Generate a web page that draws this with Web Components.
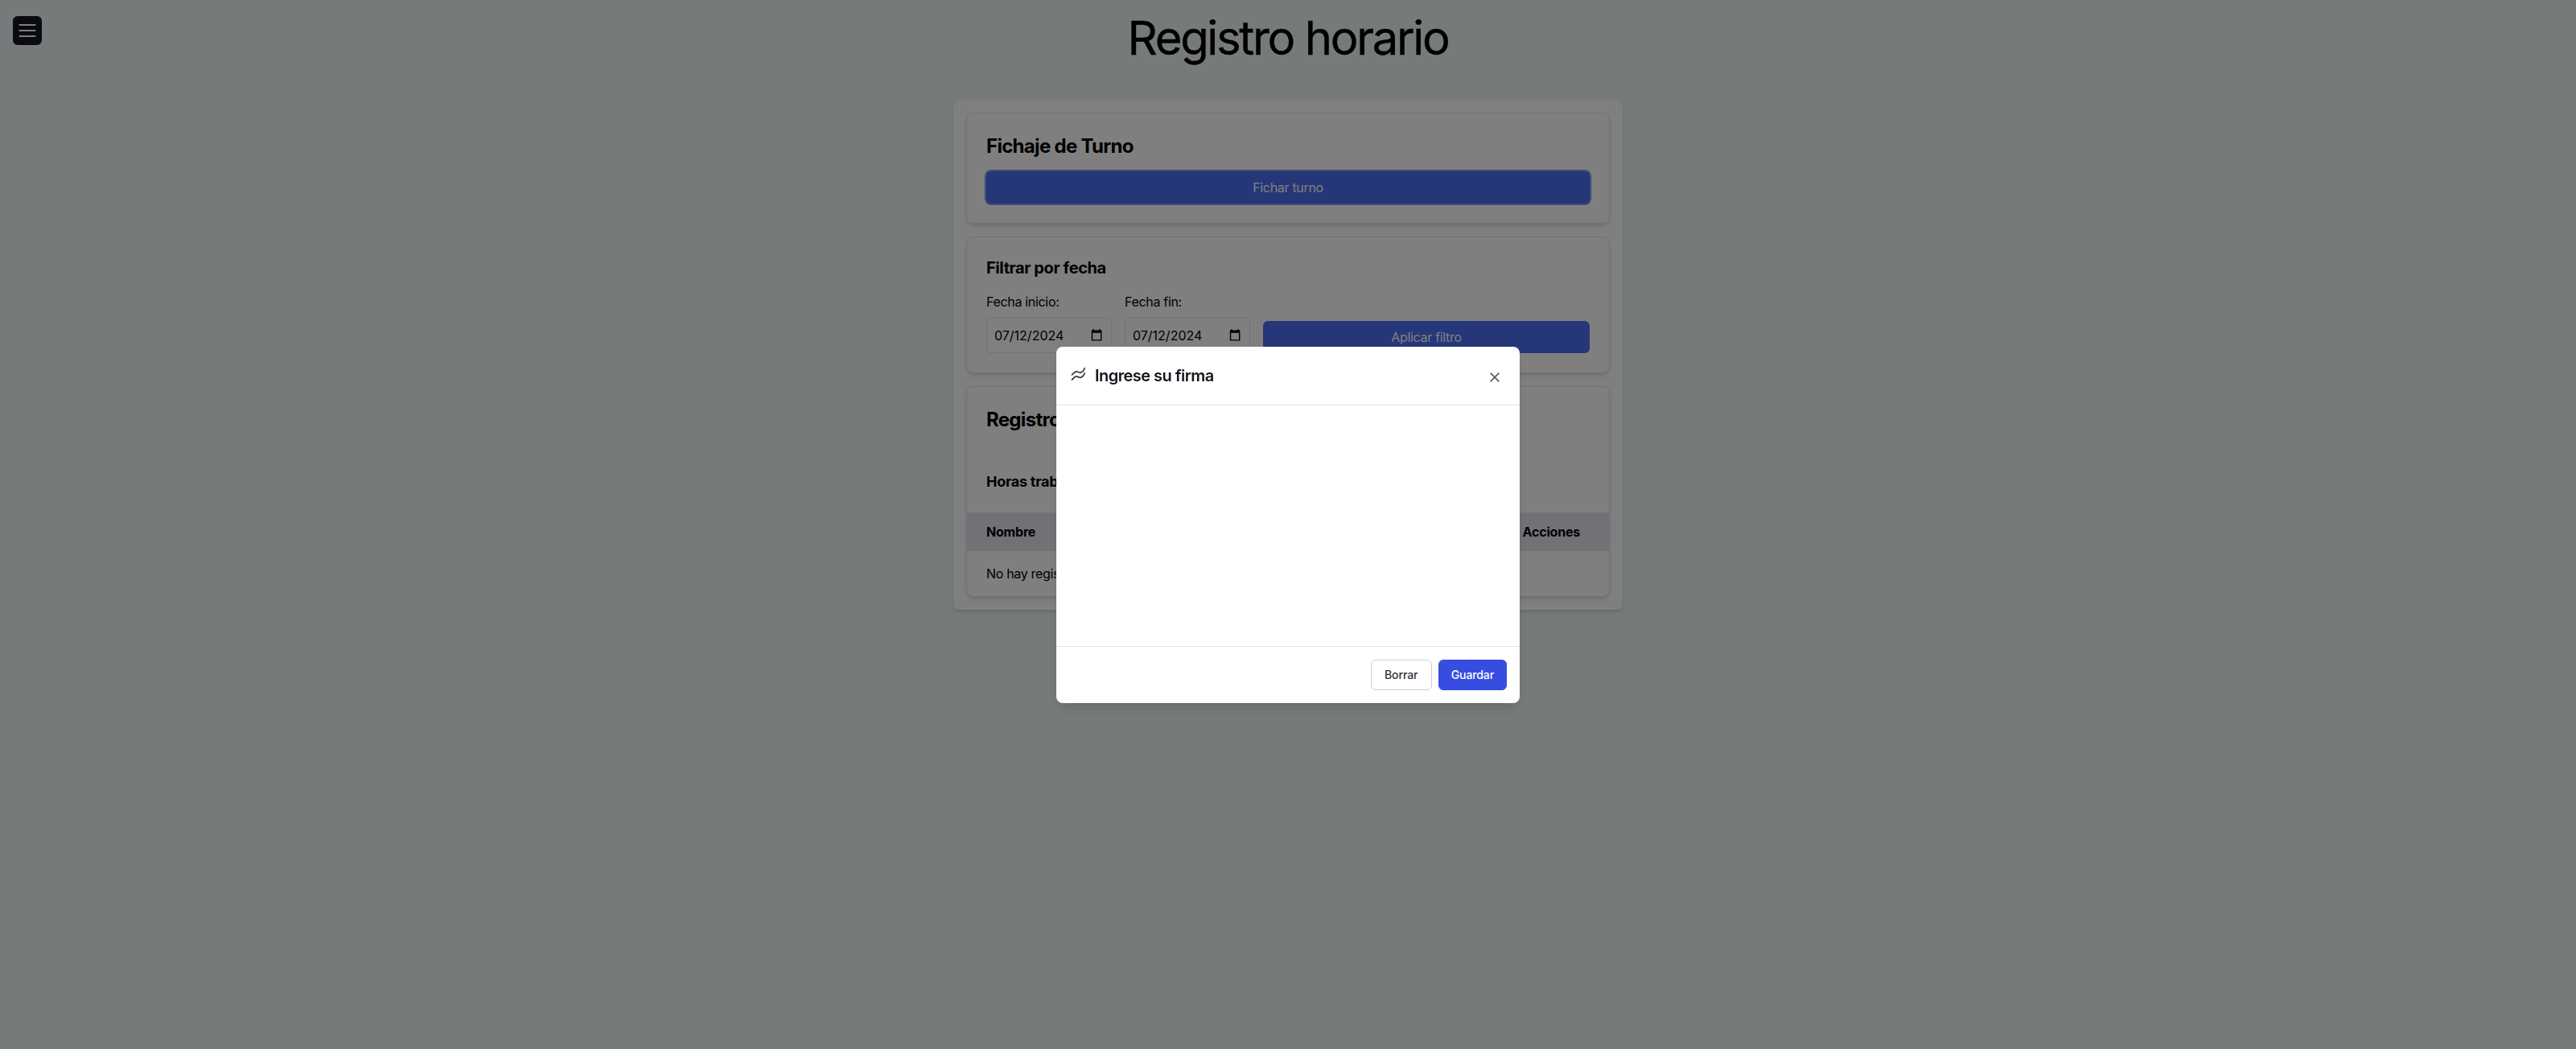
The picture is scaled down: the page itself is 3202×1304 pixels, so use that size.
<!DOCTYPE html>
<html lang="es">
<head>
<meta charset="UTF-8">
<meta name="viewport" content="width=device-width, initial-scale=1.0">
<title>Registro horario</title>
<style>
    body {
        margin: 0;
        min-height: 100vh;
        background: #eff5f6;
        color: #000;
        font-family: Inter, "Liberation Sans", sans-serif;
        font-size: 16px;
        line-height: 24px;
        letter-spacing: -0.32px;
        overflow: hidden;
    }
</style>
</head>
<body>
<registro-page>
    <menu-button slot="menu"></menu-button>
    <span slot="title">Registro horario</span>

    <panel-card>
        <card-title>Fichaje de Turno</card-title>
        <app-button focused>Fichar turno</app-button>
    </panel-card>

    <panel-card>
        <card-title size="md">Filtrar por fecha</card-title>
        <date-filter>
            <date-field label="Fecha inicio:" value="07/12/2024"></date-field>
            <date-field label="Fecha fin:" value="07/12/2024"></date-field>
            <app-button slot="action">Aplicar filtro</app-button>
        </date-filter>
    </panel-card>

    <registro-table></registro-table>
</registro-page>

<firma-modal>
    <span slot="title">Ingrese su firma</span>
    <modal-button slot="actions">Borrar</modal-button>
    <modal-button slot="actions" primary>Guardar</modal-button>
</firma-modal>

<script>
class BaseElement extends HTMLElement {
    constructor() {
        super();
        this.attachShadow({ mode: 'open' });
    }

    connectedCallback() {
        this.shadowRoot.innerHTML = this.render();
    }
}

class RegistroPage extends BaseElement {
    render() {
        return `
        <style>
            :host {
                display: flex;
                flex-direction: column;
                align-items: center;
                padding-top: 16px;
            }
            h1 {
                margin: 0 0 47px;
                padding-top: 1px;
                font-size: 58px;
                line-height: 60px;
                font-weight: 400;
                letter-spacing: -2.35px;
                -webkit-text-stroke: 0.4px #000;
            }
            main {
                display: flex;
                flex-direction: column;
                gap: 16px;
                box-sizing: border-box;
                width: 832px;
                padding: 16px;
                border-radius: 8px;
                background: #fff;
                box-shadow: 0 4px 6px -1px rgba(0, 0, 0, 0.1), 0 2px 4px -2px rgba(0, 0, 0, 0.1);
            }
        </style>
        <slot name="menu"></slot>
        <h1><slot name="title"></slot></h1>
        <main><slot></slot></main>
        `;
    }
}

class MenuButton extends BaseElement {
    render() {
        return `
        <style>
            :host {
                position: fixed;
                top: 20px;
                left: 16px;
                width: 36px;
                height: 36px;
                border-radius: 6px;
                background: #14161f;
            }
            svg { display: block; }
        </style>
        <svg width="36" height="36" viewBox="0 0 36 36" fill="none" stroke="#fff" stroke-width="2.200" stroke-linecap="round">
            <path d="M8.500 11h19M8.500 18h19M8.500 25h19"/>
        </svg>
        `;
    }
}

class PanelCard extends BaseElement {
    render() {
        return `
        <style>
            :host {
                display: flex;
                flex-direction: column;
                gap: 16px;
                padding: 24px;
                border: 1px solid #e4e4e7;
                border-radius: 8px;
                background: #fff;
                box-shadow: 0 4px 6px -1px rgba(0, 0, 0, 0.1), 0 2px 4px -2px rgba(0, 0, 0, 0.1);
            }
        </style>
        <slot></slot>
        `;
    }
}

class CardTitle extends BaseElement {
    render() {
        return `
        <style>
            :host { display: block; }
            h2 {
                margin: 0 0 -1px;
                padding-top: 1px;
                font-size: 24px;
                line-height: 32px;
                font-weight: 700;
                letter-spacing: -0.7px;
            }
            :host([size="md"]) h2 {
                font-size: 20px;
                line-height: 28px;
                letter-spacing: -0.4px;
            }
            :host([size="sm"]) h2 {
                font-size: 18px;
                line-height: 28px;
                letter-spacing: -0.25px;
            }
            :host([size]) h2 { margin: 0; padding: 0; }
        </style>
        <h2><slot></slot></h2>
        `;
    }
}

class AppButton extends BaseElement {
    render() {
        return `
        <style>
            :host { display: block; }
            button {
                display: block;
                width: 100%;
                height: 40px;
                padding: 0;
                border: 0;
                border-radius: 6px;
                background: #4a6cf2;
                color: #fff;
                font: inherit;
                letter-spacing: inherit;
            }
            :host([focused]) button {
                box-shadow: 0 0 0 2px rgba(70, 112, 235, 0.72);
            }
        </style>
        <button type="button"><slot></slot></button>
        `;
    }
}

class DateFilter extends BaseElement {
    render() {
        return `
        <style>
            :host {
                display: flex;
                align-items: flex-end;
                gap: 16px;
            }
            slot[name="action"]::slotted(*) { flex: 1; }
        </style>
        <slot></slot>
        <slot name="action"></slot>
        `;
    }
}

class DateField extends BaseElement {
    render() {
        return `
        <style>
            :host {
                display: flex;
                flex-direction: column;
                gap: 8px;
            }
            .field {
                display: flex;
                align-items: center;
                justify-content: space-between;
                box-sizing: border-box;
                width: 156px;
                height: 44px;
                padding: 0 11px 0 9px;
                border: 1px solid #e4e4e7;
                border-radius: 4px;
                letter-spacing: 0;
            }
        </style>
        <label>${this.getAttribute('label')}</label>
        <div class="field">
            <span>${this.getAttribute('value')}</span>
            <svg width="14" height="16" viewBox="0 0 14 16">
                <path d="M3 0v2M11 0v2" stroke="#000" stroke-width="1.400"/>
                <path d="M.8 1.500h12.600v13H.8zM2.200 4.800v8.400h9.800v-8.400z" fill="#000" fill-rule="evenodd"/>
            </svg>
        </div>
        `;
    }
}

class RegistroTable extends BaseElement {
    render() {
        return `
        <style>
            :host {
                display: block;
                border: 1px solid #e4e4e7;
                border-radius: 8px;
                background: #fff;
                box-shadow: 0 4px 6px -1px rgba(0, 0, 0, 0.1), 0 2px 4px -2px rgba(0, 0, 0, 0.1);
                overflow: hidden;
            }
            header, .summary { padding: 24px; }
            .row {
                display: flex;
                align-items: center;
                justify-content: space-between;
                height: 56px;
                padding: 0 36px 0 24px;
            }
            .head {
                height: 48px;
                background: #e4e2ea;
                font-weight: 700;
                letter-spacing: -0.2px;
            }
        </style>
        <header><card-title>Registros</card-title></header>
        <div class="summary"><card-title size="sm">Horas trabajadas</card-title></div>
        <div class="row head"><span>Nombre</span><span>Acciones</span></div>
        <div class="row"><span>No hay registros</span></div>
        `;
    }
}

class FirmaModal extends BaseElement {
    render() {
        return `
        <style>
            :host {
                position: fixed;
                inset: 0;
                display: flex;
                align-items: center;
                justify-content: center;
                background: rgba(0, 0, 0, 0.5);
            }
            .dialog {
                width: 576px;
                border-radius: 8px;
                background: #fff;
                color: #14141c;
                box-shadow: 0 10px 15px -3px rgba(0, 0, 0, 0.1), 0 4px 6px -4px rgba(0, 0, 0, 0.1);
            }
            header {
                display: flex;
                align-items: center;
                height: 72px;
                padding: 0 25px 0 16px;
                border-bottom: 1px solid #dfe1e4;
            }
            .icon { margin: -4px 9px 0 0; }
            h3 {
                flex: 1;
                margin: 0;
                font-size: 20px;
                line-height: 28px;
                font-weight: 600;
                letter-spacing: -0.55px;
            }
            .close { margin-top: 4px; }
            canvas { display: block; width: 576px; height: 299px; }
            footer {
                display: flex;
                justify-content: flex-end;
                gap: 8px;
                padding: 16px;
                border-top: 1px solid #dfe1e4;
            }
        </style>
        <section class="dialog">
            <header>
                <svg class="icon" width="23" height="20" viewBox="0 0 23 20" fill="none" stroke="#3c3e48" stroke-width="1.800" stroke-linecap="round" stroke-linejoin="round">
                    <path d="M3.500 10.900C5 9.400 7 6.800 9 6.800S12 8.600 14 8.200 18.300 5.500 19.200 2.600"/>
                    <path d="M3.500 17C5 15.500 7 12.900 9 12.900S12 14.700 14 14.300 18.300 11.600 19.200 8.800"/>
                </svg>
                <h3><slot name="title"></slot></h3>
                <svg class="close" width="12" height="12" viewBox="0 0 12 12" fill="none" stroke="#5a5c64" stroke-width="1.700" stroke-linecap="round">
                    <path d="M1.200 1.200l9.600 9.600M10.800 1.200l-9.600 9.600"/>
                </svg>
            </header>
            <canvas width="576" height="299"></canvas>
            <footer><slot name="actions"></slot></footer>
        </section>
        `;
    }
}

class ModalButton extends BaseElement {
    render() {
        return `
        <style>
            :host { display: block; }
            button {
                height: 38px;
                min-width: 76px;
                padding: 0 15px;
                border: 1px solid #cbced4;
                border-radius: 6px;
                background: #fff;
                color: #30323d;
                font: 500 14px/20px Inter, sans-serif;
                letter-spacing: -0.1px;
            }
            :host([primary]) button {
                border-color: #374de0;
                background: #374de0;
                color: #fff;
            }
        </style>
        <button type="button"><slot></slot></button>
        `;
    }
}

customElements.define('registro-page', RegistroPage);
customElements.define('menu-button', MenuButton);
customElements.define('panel-card', PanelCard);
customElements.define('card-title', CardTitle);
customElements.define('app-button', AppButton);
customElements.define('date-filter', DateFilter);
customElements.define('date-field', DateField);
customElements.define('registro-table', RegistroTable);
customElements.define('firma-modal', FirmaModal);
customElements.define('modal-button', ModalButton);
</script>
</body>
</html>
